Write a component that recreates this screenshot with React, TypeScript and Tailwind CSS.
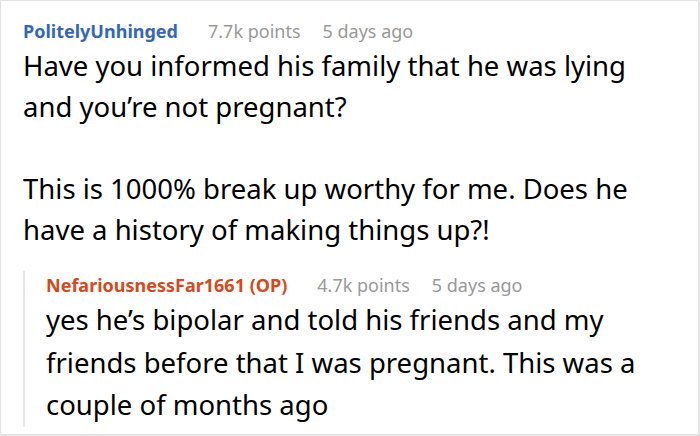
import React from 'react';

const font = { fontFamily: '"Noto Sans", "Open Sans", sans-serif' };

const Meta: React.FC<{ author: string; color: string; points: string; age: string }> = ({
  author,
  color,
  points,
  age,
}) => (
  <div className="flex items-baseline text-[18px] leading-[24px]">
    <span className={`font-bold ${color}`}>{author}</span>
    <span className="ml-[30px] text-[#999999]">{points}</span>
    <span className="ml-[22px] text-[#999999]">{age}</span>
  </div>
);

export default function App() {
  return (
    <div
      className="w-[700px] h-[436px] bg-white border border-[#e2e2e2] border-r-2 border-b-2 overflow-hidden text-black"
      style={font}
    >
      <div className="pl-[22px] pt-[18px]">
        <Meta author="PolitelyUnhinged" color="text-[#3467ba]" points="7.7k points" age="5 days ago" />
        <div className="text-[27.5px] leading-[41px] mt-[2px] pr-[40px]">
          <p>Have you informed his family that he was lying and you’re not pregnant?</p>
          <p className="mt-[41px]">
            This is 1000% break up worthy for me. Does he have a history of making things up?!
          </p>
        </div>
        <div className="mt-[21px] border-l-2 border-[#e6e6e6] pl-[21px] pt-[2px]">
          <Meta
            author="NefariousnessFar1661 (OP)"
            color="text-[#d6491c]"
            points="4.7k points"
            age="5 days ago"
          />
          <p className="text-[27.5px] leading-[42.5px] mt-[2px] pr-[30px]">
            yes he’s bipolar and told his friends and my friends before that I was pregnant. This was a couple of months ago
          </p>
        </div>
      </div>
    </div>
  );
}
